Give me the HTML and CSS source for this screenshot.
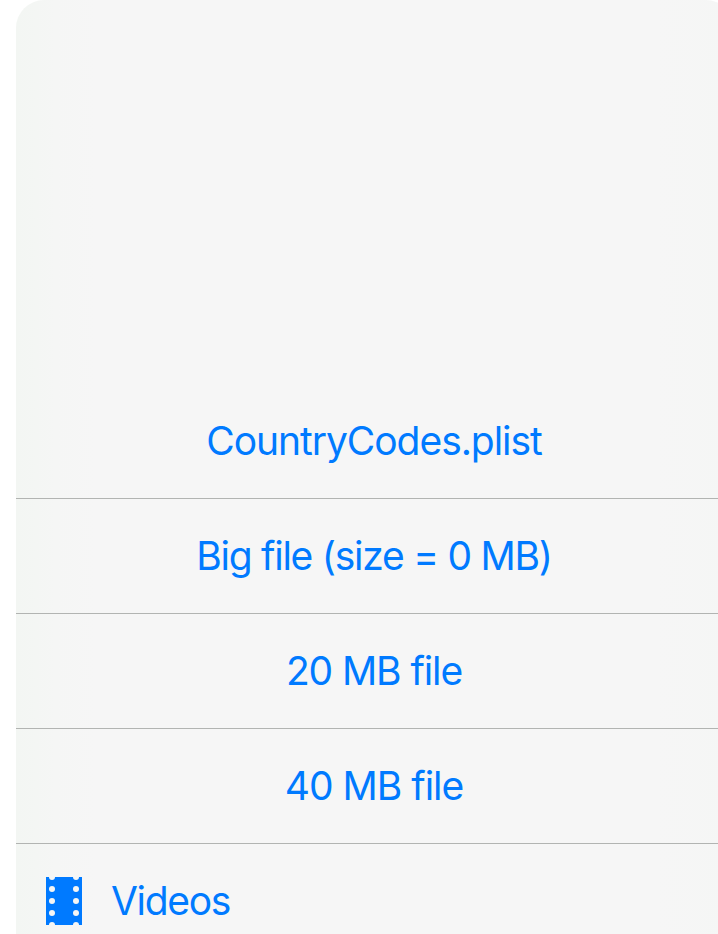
FILE: index.html
```html
<!DOCTYPE html>
<html lang="en">
<head>
<meta charset="utf-8">
<title>Files</title>
<link rel="stylesheet" href="styles.css">
</head>
<body>
<main class="sheet">
  <div class="row"><span class="label codes">CountryCodes.plist</span></div>
  <div class="row"><span class="label big">Big file (size = 0 MB)</span></div>
  <div class="row"><span class="label twenty">20 MB file</span></div>
  <div class="row"><span class="label forty">40 MB file</span></div>
  <div class="row with-icon">
    <svg class="film" viewBox="0 0 36 48" width="36" height="48">
      <rect width="36" height="48" fill="#007aff"/>
      <g fill="#f5f6f5">
        <circle cx="6" cy="0" r="3"/><circle cx="6" cy="12" r="3"/><circle cx="6" cy="24" r="3"/><circle cx="6" cy="36" r="3"/><circle cx="6" cy="48" r="3"/>
        <circle cx="30" cy="0" r="3"/><circle cx="30" cy="12" r="3"/><circle cx="30" cy="24" r="3"/><circle cx="30" cy="36" r="3"/><circle cx="30" cy="48" r="3"/>
      </g>
    </svg>
    <span class="label videos">Videos</span>
  </div>
</main>
</body>
</html>
```
FILE: styles.css
```css
* { box-sizing: border-box; }
body {
  margin: 0;
  height: 934px;
  overflow: hidden;
  background: #fff;
  font-family: Inter, "Liberation Sans", sans-serif;
}
.sheet {
  width: 718px;
  height: 934px;
  padding-top: 384px;
  overflow: hidden;
  margin-left: 16px;
  border-radius: 28px 28px 0 0;
  background: linear-gradient(90deg, #f3f6f3, #f5f6f5 40px, #f6f6f6 80px, #f6f6f6 640px, #f5f6f5);
}
.row {
  display: flex;
  align-items: center;
  justify-content: center;
  height: 115px;
  padding-right: 2px;
  border-bottom: 1px solid #b2b4b2;
}
.with-icon {
  justify-content: flex-start;
  gap: 29px;
  padding-left: 30px;
  border-bottom-color: transparent;
}
.label {
  padding-bottom: 1px;
  color: #007aff;
  font-size: 39px;
  line-height: 47px;
  white-space: nowrap;
}
.codes { letter-spacing: -1.05px; }
.big { letter-spacing: -1.25px; }
.twenty { letter-spacing: -1.1px; }
.forty { letter-spacing: -1px; }
.videos { letter-spacing: -1.3px; }
```
